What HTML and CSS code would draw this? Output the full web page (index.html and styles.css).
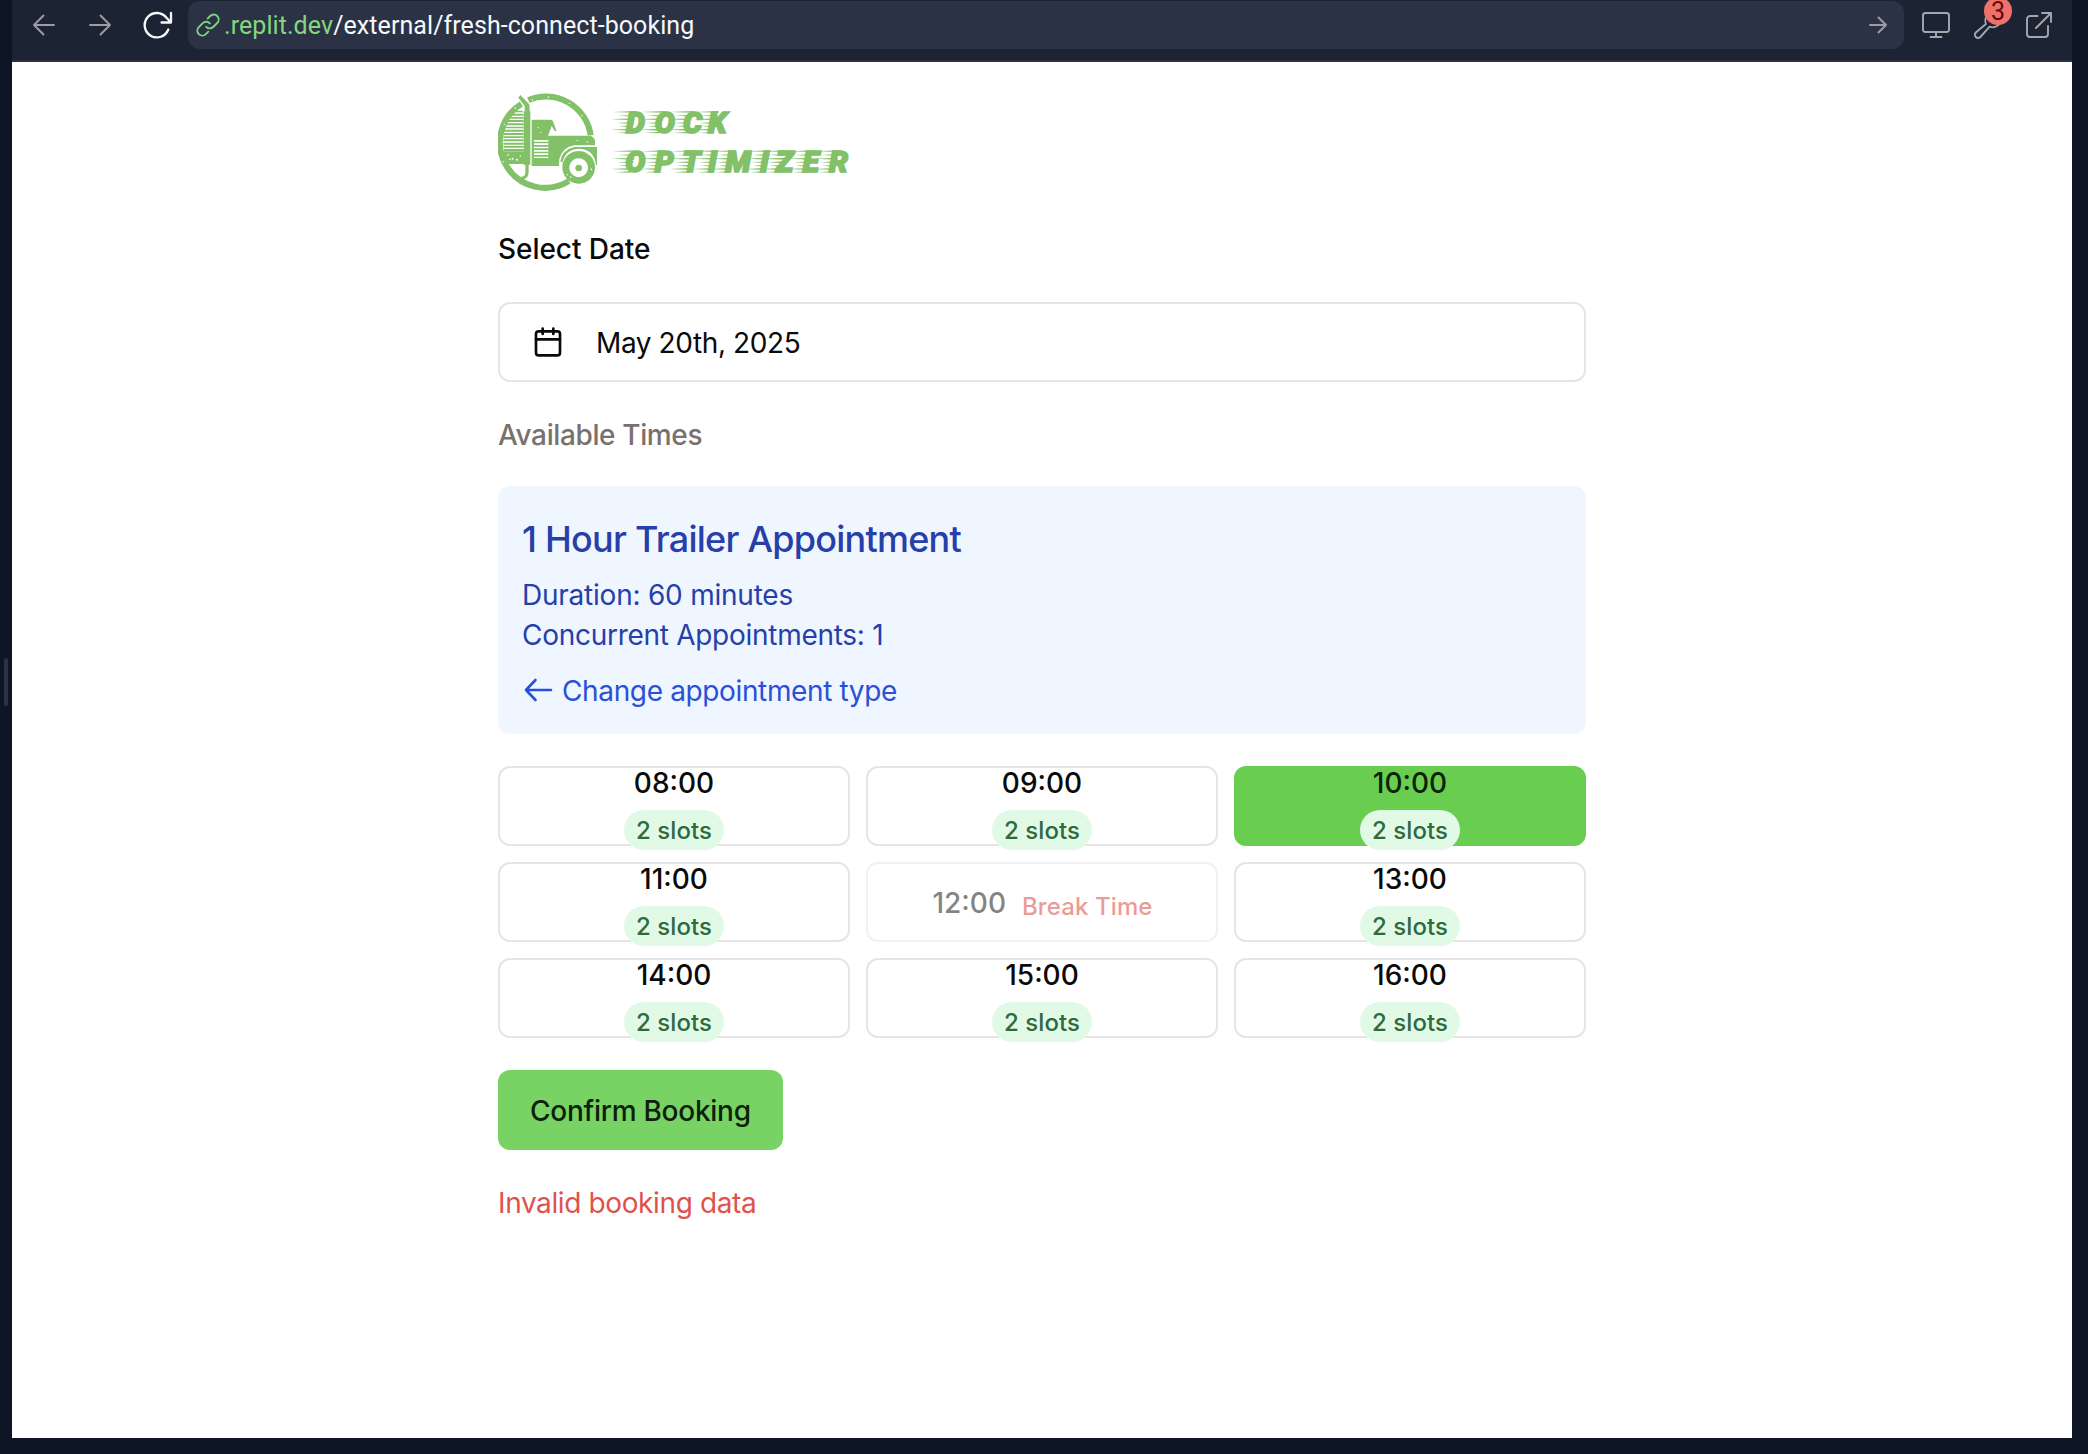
FILE: index.html
```html
<!DOCTYPE html>
<html lang="en">
<head>
<meta charset="utf-8">
<title>Dock Optimizer – Booking</title>
<link rel="stylesheet" href="styles.css">
</head>
<body>
<div class="window">
  <span class="resize-handle"></span>
  <header class="toolbar">
    <nav class="nav">
      <svg class="icon muted" width="24" height="24" viewBox="0 0 24 24"><path d="M22 12H2M11.500 2.500 2 12l9.500 9.500"/></svg>
      <svg class="icon muted" width="24" height="24" viewBox="0 0 24 24"><path d="M2 12h20M12.500 2.500 22 12l-9.500 9.500"/></svg>
      <svg class="icon reload" width="32" height="28" viewBox="0 0 32 28"><path d="M27.300 18.500A12.200 12.200 0 1 1 25.500 6.700l4 4.300M30 2v9.500h-9.500"/></svg>
    </nav>
    <div class="address">
      <svg class="icon link" width="24" height="24" viewBox="0 0 24 24"><path d="M10.200 13.800a4.800 4.800 0 0 0 7 .2l4-4a4.900 4.900 0 0 0-7-7l-2.600 2.600M13.800 10.400a4.800 4.800 0 0 0-7-.2l-4 4a4.900 4.900 0 0 0 7 7l2.500-2.500"/></svg>
      <span class="url"><span class="host">.replit.dev</span>/external/fresh-connect-booking</span>
      <svg class="icon muted" width="18" height="18" viewBox="0 0 18 18"><path d="M1 9h16M9.500 1.500 17 9l-7.500 7.500"/></svg>
    </div>
    <div class="tools">
      <svg class="icon tool" width="30" height="28" viewBox="0 0 30 28"><rect x="2" y="2" width="26" height="19" rx="2.500"/><path d="M15 21v5M9.500 26h11"/></svg>
      <span class="devtools">
        <svg class="icon tool" width="30" height="28" viewBox="0 0 30 28"><path d="M15.500 3.500a8 8 0 0 0-2.600 9.500L2.800 21.500a3.200 3.200 0 0 0 4.600 4.500l9.200-10.300a8 8 0 0 0 10-3.200"/></svg>
        <span class="count">3</span>
      </span>
      <svg class="icon tool" width="28" height="28" viewBox="0 0 28 28"><path d="M12.500 5H5a3 3 0 0 0-3 3v15a3 3 0 0 0 3 3h15a3 3 0 0 0 3-3v-8M17 2h9v9M26 2 11 17"/></svg>
    </div>
  </header>

  <main class="page">
    <div class="content">
      <svg class="logo" width="354" height="100" viewBox="54 36 1062 300">
        <defs>
          <g id="speed">
            <path d="M-40 3 32 0v5zM-22 14 29 11v6zM-44 25 26 22v6zM-26 36 23 33v6zM-20 46 20 43v6zM-44 56 18 53v6zM-30 66 16 62v5z"/>
          </g>
        </defs>
        <g fill="none" stroke="#82c168" stroke-width="18">
          <path d="M145 60A135.500 135.500 0 0 1 332 166"/>
          <path d="M124 72A135.500 135.500 0 0 0 267 303"/>
        </g>
        <g fill="#82c168">
          <path d="M104 92h24v5h-28zM96 101h34v6H92zM88 111h43v5H84zM82 120h49v6H79zM78 130h53v6H75zM74 140h57v5H73zM72 149h59v6H72zM71 159h60v6H70zM70 169h61v5H70zM70 178h61v6H70zM70 188h61v6H70zM70 198h61v5H71zM70 207h61v6H72z"/>
          <path d="M62 214h70v38H78z"/>
          <path d="M121 45l24 25q4 4 4 10v14h2v160h-5v22q0 22-20 22h-20l-8-8h27q11 0 11-14v-22h-5V94h3V78l-19-25z"/>
          <path fill-rule="evenodd" d="M155 121q0-2 3-2h53q7 0 9 7l4 12 6 16-6-2-9-14-11 29h125q12 2 16 14v15h-62q-35 5-45 40l-1 22h-82zM162 180v5h43v-5zm0 10v5h43v-5zm0 10v5h43v-5zm0 10v5h43v-5zm0 10v5h43v-5zm0 10v4h43v-4z"/>
          <path d="M241 244q4-34 42-43h68v54h-3q-6-49-54-49-38 3-47 42z"/>
          <path fill-rule="evenodd" d="M296 213a49 49 0 1 0 .1 0zM296 235a28 28 0 1 1-.1 0z"/>
          <circle cx="296" cy="264" r="10"/>
        </g>
        <g fill="#fff">
          <circle cx="84" cy="225" r="2.500"/><circle cx="98" cy="236" r="3"/><circle cx="111" cy="239" r="3"/><circle cx="121" cy="228" r="2"/>
          <circle cx="90" cy="238" r="2.500"/><circle cx="73" cy="133" r="2"/><circle cx="106" cy="84" r="2.500"/><circle cx="157" cy="60" r="2"/>
          <circle cx="205" cy="51" r="2.500"/><circle cx="268" cy="70" r="2"/><circle cx="306" cy="107" r="2"/><circle cx="175" cy="143" r="2"/>
          <circle cx="182" cy="157" r="2"/><circle cx="292" cy="181" r="2"/><circle cx="322" cy="186" r="2"/><circle cx="70" cy="245" r="2"/>
          <circle cx="272" cy="291" r="2.500"/><circle cx="334" cy="268" r="2.500"/><circle cx="262" cy="284" r="2"/>
        </g>
        <g fill="#82c168">
          <use href="#speed" x="437" y="93"/><use href="#speed" x="523" y="93"/><use href="#speed" x="608" y="93"/><use href="#speed" x="684" y="93"/>
          <use href="#speed" x="437" y="211"/><use href="#speed" x="523" y="211"/><use href="#speed" x="612" y="211"/><use href="#speed" x="683" y="211"/><use href="#speed" x="735" y="211"/><use href="#speed" x="840" y="211"/><use href="#speed" x="888" y="211"/><use href="#speed" x="968" y="211"/><use href="#speed" x="1047" y="211"/>
          <text class="wordmark" x="438 524 609 684" y="158">DOCK</text>
          <text class="wordmark" x="436 524 607 684 736 840 887 968 1047" y="276">OPTIMIZER</text>
        </g>
      </svg>

      <h2 class="label date-label">Select Date</h2>
      <button class="date-field">
        <svg class="calendar" width="32" height="32" viewBox="0 0 24 24"><path d="M8 2v4M16 2v4M3 10h18"/><rect x="3" y="4" width="18" height="18" rx="2"/></svg>
        <span class="date-value">May 20th, 2025</span>
      </button>

      <h3 class="label times-label">Available Times</h3>

      <section class="summary">
        <h1>1 Hour Trailer Appointment</h1>
        <p class="duration">Duration: 60 minutes</p>
        <p class="concurrent">Concurrent Appointments: 1</p>
        <a class="change"><svg width="32" height="32" viewBox="0 0 32 32"><path d="M29 16H4M13.500 6 4 16l9.500 10"/></svg><span>Change appointment type</span></a>
      </section>

      <div class="slots">
        <button class="slot"><span class="time">08:00</span><span class="badge">2 slots</span></button>
        <button class="slot"><span class="time">09:00</span><span class="badge">2 slots</span></button>
        <button class="slot selected"><span class="time">10:00</span><span class="badge">2 slots</span></button>
        <button class="slot"><span class="time">11:00</span><span class="badge">2 slots</span></button>
        <button class="slot break"><span class="time">12:00</span><span class="reason">Break Time</span></button>
        <button class="slot"><span class="time">13:00</span><span class="badge">2 slots</span></button>
        <button class="slot"><span class="time">14:00</span><span class="badge">2 slots</span></button>
        <button class="slot"><span class="time">15:00</span><span class="badge">2 slots</span></button>
        <button class="slot"><span class="time">16:00</span><span class="badge">2 slots</span></button>
      </div>

      <button class="confirm">Confirm Booking</button>
      <p class="error">Invalid booking data</p>
    </div>
  </main>
</div>
</body>
</html>
```
FILE: styles.css
```css
* { box-sizing: border-box; }

body {
  margin: 0;
  background: #0e1525;
  color: #0a0a0a;
  font: 400 28px/40px Inter, "Liberation Sans", sans-serif;
}

h1, h2, h3, p { margin: 0; }

button {
  font: inherit;
  color: inherit;
  background: none;
  border: 0;
}

.window {
  position: relative;
  display: flex;
  flex-direction: column;
  height: 1454px;
  padding: 0 16px 16px 12px;
}

.resize-handle {
  position: absolute;
  left: 4px;
  top: 658px;
  width: 4px;
  height: 48px;
  border-radius: 2px;
  background: #2b3245;
}

/* Browser toolbar */
.toolbar {
  display: flex;
  align-items: flex-start;
  height: 62px;
  padding-top: 1px;
  background: #1c2333;
  border-bottom: 2px solid #2b2f42;
}

.nav {
  display: flex;
  align-items: center;
  gap: 32px;
  width: 176px;
  height: 48px;
  padding-left: 20px;
}

.nav .reload { margin-left: -3px; }

.icon {
  flex: none;
  fill: none;
  stroke: currentColor;
  stroke-width: 1.9;
  stroke-linecap: round;
  stroke-linejoin: round;
}

.muted { color: #9a9da5; }

.reload {
  color: #f5f9fc;
  stroke-width: 2.3;
}

.address {
  display: flex;
  align-items: center;
  flex: none;
  width: 1716px;
  height: 48px;
  padding: 0 17px 0 8px;
  border-radius: 12px;
  background: #2b3245;
}

.link { color: #7fd47f; }

.url {
  flex: 1;
  padding: 2px 0 0 4px;
  color: #f5f9fc;
  font: 400 25px/46px Roboto, "Liberation Sans", sans-serif;
  letter-spacing: 0.07px;
}

.host { color: #85d67f; }

.tools {
  display: flex;
  align-items: center;
  height: 48px;
  padding-left: 17px;
  gap: 22px;
}

.tool { color: #a4a7ad; }

.devtools {
  position: relative;
  display: flex;
}

.count {
  position: absolute;
  left: 11px;
  top: -14px;
  width: 28px;
  height: 28px;
  border-radius: 50%;
  background: #f0716a;
  color: #5c0f0c;
  text-align: center;
  font: 400 25px/29px Roboto, "Liberation Sans", sans-serif;
}

/* Booking page */
.page {
  flex: 1;
  display: flex;
  justify-content: center;
  background: #fff;
}

.content {
  width: 1088px;
  padding-top: 30px;
}

.logo { display: block; }

.wordmark {
  font: italic 900 90px Roboto, "Liberation Sans", sans-serif;
  stroke: #82c168;
  stroke-width: 5px;
}

.label {
  font-size: 28px;
  font-weight: 500;
  line-height: 40px;
}

.date-label {
  margin: 37px 0 33px;
  letter-spacing: -0.06px;
}

.date-field {
  display: flex;
  align-items: center;
  gap: 32px;
  width: 100%;
  height: 80px;
  padding: 0 32px;
  border: 2px solid #e5e5e5;
  border-radius: 12px;
  letter-spacing: -0.4px;
}

.date-value { padding-top: 1px; }

.calendar {
  fill: none;
  stroke: currentColor;
  stroke-width: 2;
  stroke-linecap: round;
  stroke-linejoin: round;
}

.times-label {
  margin: 33px 0 31px;
  color: #79716b;
  letter-spacing: -0.38px;
}

.summary {
  height: 248px;
  padding: 25px 24px 23px;
  border-radius: 12px;
  background: #eff6ff;
  color: #263fa9;
}

.summary h1 {
  margin-bottom: 8px;
  font-size: 36px;
  font-weight: 500;
  line-height: 56px;
  letter-spacing: -0.75px;
}

.duration { letter-spacing: -0.23px; }

.concurrent { letter-spacing: -0.28px; }

.change {
  display: flex;
  align-items: center;
  gap: 8px;
  margin-top: 16px;
  color: #2b50d8;
  letter-spacing: -0.36px;
}

.change svg {
  margin-top: -2px;
  fill: none;
  stroke: currentColor;
  stroke-width: 2.6;
  stroke-linecap: round;
  stroke-linejoin: round;
}

.slots {
  display: grid;
  grid-template-columns: repeat(3, 1fr);
  gap: 16px;
  margin: 32px 0;
}

.slot {
  display: flex;
  flex-direction: column;
  align-items: center;
  justify-content: center;
  gap: 8px;
  height: 80px;
  padding: 0;
  border: 2px solid #e5e5e5;
  border-radius: 12px;
  font-weight: 500;
}

.time { margin: 1px 0 -1px; }

.badge {
  flex: none;
  padding: 5px 12px 3px;
  border-radius: 20px;
  background: #e0fae6;
  color: #2f693c;
  font-size: 24px;
  line-height: 32px;
  letter-spacing: 0.1px;
}

.selected {
  border-color: #69ce50;
  background: #69ce50;
  color: #0a2307;
}

.break {
  flex-direction: row;
  gap: 16px;
  padding-left: 1px;
  opacity: 0.5;
}

.reason {
  margin-top: 10px;
  color: #d93a32;
  font-size: 24px;
  line-height: 32px;
  letter-spacing: 0.1px;
}

.confirm {
  display: block;
  height: 80px;
  padding: 1px 32px 0;
  border-radius: 12px;
  background: #79d364;
  color: #0c210b;
  font-weight: 500;
  letter-spacing: -0.26px;
}

.error {
  margin-top: 33px;
  color: #df524c;
  letter-spacing: -0.38px;
}
```
